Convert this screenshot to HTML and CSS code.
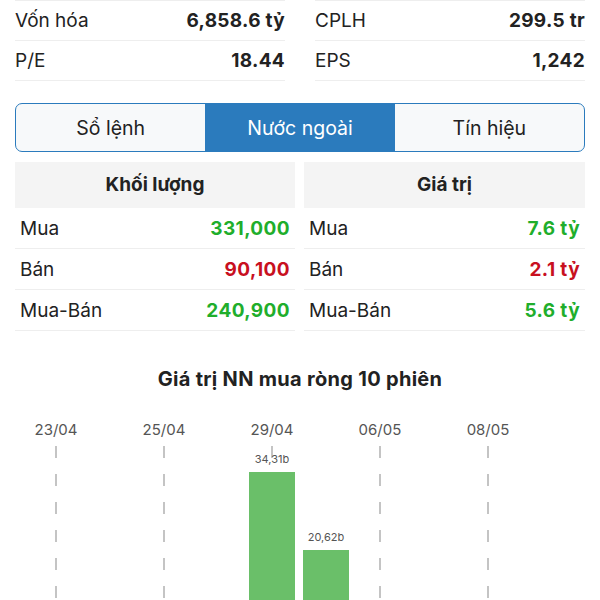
FILE: index.html
```html
<!DOCTYPE html>
<html lang="vi">
<head>
  <meta charset="UTF-8">
  <title>Nước ngoài</title>
  <link rel="stylesheet" href="styles.css">
</head>
<body>

<div class="stats">
  <div class="stat-row"><span>Vốn hóa</span><b>6,858.6 tỷ</b></div>
  <div class="stat-row"><span>CPLH</span><b>299.5 tr</b></div>
  <div class="stat-row"><span>P/E</span><b>18.44</b></div>
  <div class="stat-row"><span>EPS</span><b>1,242</b></div>
</div>

<div class="tabs">
  <button class="tab">Sổ lệnh</button>
  <button class="tab active">Nước ngoài</button>
  <button class="tab">Tín hiệu</button>
</div>

<div class="foreign">
  <div class="panel">
    <div class="panel-head">Khối lượng</div>
    <div class="panel-row"><span>Mua</span><b class="up">331,000</b></div>
    <div class="panel-row"><span>Bán</span><b class="down">90,100</b></div>
    <div class="panel-row"><span>Mua-Bán</span><b class="up">240,900</b></div>
  </div>
  <div class="panel">
    <div class="panel-head">Giá trị</div>
    <div class="panel-row"><span>Mua</span><b class="up">7.6 tỷ</b></div>
    <div class="panel-row"><span>Bán</span><b class="down">2.1 tỷ</b></div>
    <div class="panel-row"><span>Mua-Bán</span><b class="up">5.6 tỷ</b></div>
  </div>
</div>

<h3 class="chart-title">Giá trị NN mua ròng 10 phiên</h3>

<div class="chart" id="chart"></div>

<script>
  // 10 sessions, labels shown every other session
  const sessions = [
    { date: '23/04', value: 0 },
    { date: '24/04', value: 0 },
    { date: '25/04', value: 0 },
    { date: '26/04', value: 0 },
    { date: '29/04', value: 34.31 },
    { date: '02/05', value: 20.62 },
    { date: '06/05', value: 0 },
    { date: '07/05', value: 0 },
    { date: '08/05', value: 0 },
    { date: '09/05', value: 0 }
  ];
  const chart = document.getElementById('chart');
  const pxPerUnit = 195 / 34.31;

  sessions.forEach((s, i) => {
    const col = document.createElement('div');
    col.className = 'col' + (i % 2 === 0 ? ' marked' : '');
    let plot = '';
    if (s.value > 0) {
      plot = `<div class="bar-label">${s.value.toFixed(2).replace('.', ',')}b</div>
              <div class="bar" style="height:${Math.round(s.value * pxPerUnit)}px"></div>`;
    }
    col.innerHTML = `
      <div class="col-date">${i % 2 === 0 ? s.date : ''}</div>
      <div class="plot">${plot}</div>
    `;
    chart.appendChild(col);
  });
</script>

</body>
</html>
```

FILE: styles.css
```css
body {
  margin: 0;
  padding: 0 15px;
  font-family: 'Inter', 'Liberation Sans', sans-serif;
  color: #222;
  background: #fff;
  overflow: hidden;
}
.stats {
  display: grid;
  grid-template-columns: 1fr 1fr;
  column-gap: 30px;
}
.stat-row {
  display: flex;
  justify-content: space-between;
  align-items: center;
  height: 39px;
  border-top: 1px solid #eee;
  font-size: 19px;
}
.stats .stat-row:nth-child(n+3) {
  border-bottom: 1px solid #eee;
}
.stat-row b {
  font-weight: 700;
  letter-spacing: 0.3px;
}
.tabs {
  display: flex;
  margin-top: 22px;
  height: 47px;
  border: 1.5px solid #2b7bbd;
  border-radius: 7px;
  overflow: hidden;
  background: #f7f9fa;
}
.tab {
  flex: 1;
  border: none;
  background: transparent;
  font-family: inherit;
  font-size: 19.5px;
  color: #222;
  padding: 0;
}
.tab.active {
  background: #2b7bbd;
  color: #fff;
}
.foreign {
  display: grid;
  grid-template-columns: 280px 1fr;
  column-gap: 9px;
  margin-top: 10px;
}
.panel-head {
  height: 46px;
  line-height: 46px;
  background: #f4f4f4;
  text-align: center;
  font-size: 19px;
  font-weight: 700;
}
.panel-row {
  display: flex;
  justify-content: space-between;
  align-items: center;
  height: 40px;
  padding: 0 5px;
  border-bottom: 1px solid #eee;
  font-size: 19px;
}
.panel-row b {
  font-weight: 700;
  letter-spacing: 0.4px;
}
.up {
  color: #1fae2c;
}
.down {
  color: #c8101f;
}
.chart-title {
  margin: 36px 0 0;
  text-align: center;
  font-size: 20px;
  font-weight: 700;
  line-height: 24px;
  letter-spacing: 0.3px;
}
.chart {
  display: grid;
  grid-template-columns: repeat(10, 54px);
  width: 540px;
  margin: 27px 0 0 14px;
}
.col {
  display: flex;
  flex-direction: column;
  align-items: center;
}
.col-date {
  height: 24px;
  line-height: 24px;
  font-size: 15px;
  color: #555;
}
.plot {
  margin-top: 4px;
  height: 221px;
  width: 100%;
  display: flex;
  flex-direction: column;
  justify-content: flex-end;
  align-items: center;
}
.col.marked .plot {
  background: repeating-linear-gradient(to bottom, #c4c4c4 0 12px, transparent 12px 28px) center / 2px 100% no-repeat;
}
.bar-label {
  font-size: 11px;
  color: #555;
  margin-bottom: 6px;
}
.bar {
  width: 46px;
  background: #6abf69;
}
```
